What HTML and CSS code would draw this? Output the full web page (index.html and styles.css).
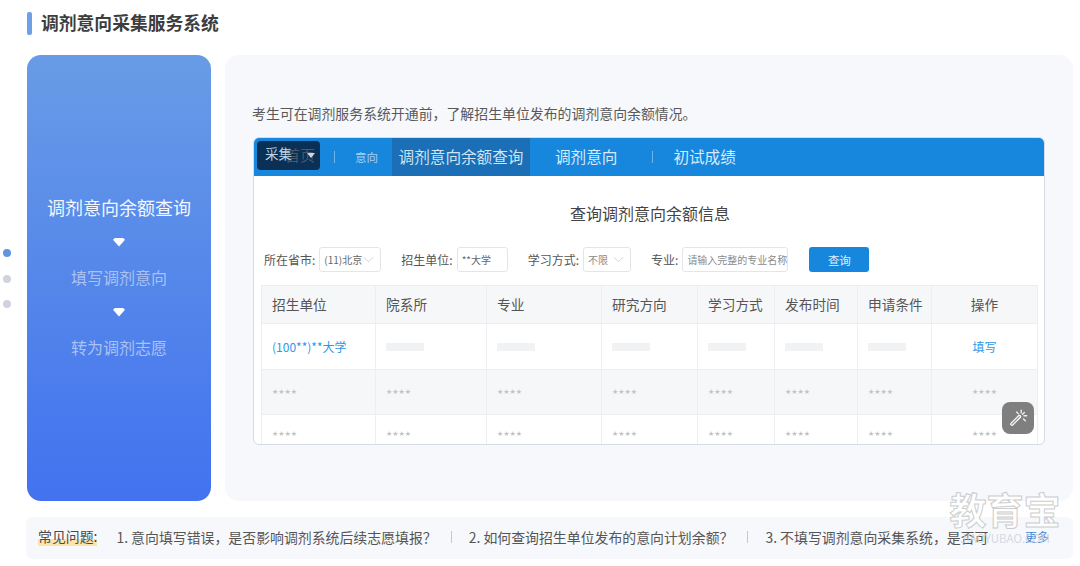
FILE: index.html
```html
<!DOCTYPE html>
<html lang="zh-CN">
<head>
<meta charset="utf-8">
<title>调剂意向采集服务系统</title>
<link rel="stylesheet" href="styles.css">
</head>
<body>
<div class="page">
  <h1 class="heading">调剂意向采集服务系统</h1>
  <div class="main">
    <div class="dots"><i class="dot on"></i><i class="dot"></i><i class="dot"></i></div>
    <nav class="side">
      <div class="step active">调剂意向余额查询</div>
      <i class="arrow"></i>
      <div class="step">填写调剂意向</div>
      <i class="arrow"></i>
      <div class="step">转为调剂志愿</div>
    </nav>
    <section class="panel">
      <p class="intro">考生可在调剂服务系统开通前，了解招生单位发布的调剂意向余额情况。</p>
      <div class="window">
        <div class="tabs">
          <div class="badge"><span class="ghost">首页</span><span class="badge-text">采集</span><i class="caret"></i></div>
          <i class="sep sep-a"></i>
          <span class="tab-small">意向</span>
          <span class="tab current">调剂意向余额查询</span>
          <span class="tab plain">调剂意向</span>
          <i class="sep sep-b"></i>
          <span class="tab last">初试成绩</span>
        </div>
        <h2 class="query-title">查询调剂意向余额信息</h2>
        <div class="form">
          <label class="lbl">所在省市:</label>
          <div class="ctl sel w62"><span>(11)北京</span><svg class="chev" viewBox="0 0 12 7"><path d="M1 1l5 5 5-5"/></svg></div>
          <label class="lbl l20">招生单位:</label>
          <div class="ctl w51 dark"><span>**大学</span></div>
          <label class="lbl l20">学习方式:</label>
          <div class="ctl sel w48"><span class="muted">不限</span><svg class="chev" viewBox="0 0 12 7"><path d="M1 1l5 5 5-5"/></svg></div>
          <label class="lbl l20">专业:</label>
          <div class="ctl w106"><span class="muted">请输入完整的专业名称</span></div>
          <button class="btn" type="button">查询</button>
        </div>
        <div class="table">
          <div class="row head">
            <span>招生单位</span><span>院系所</span><span>专业</span><span>研究方向</span><span>学习方式</span><span>发布时间</span><span>申请条件</span><span class="center">操作</span>
          </div>
          <div class="row first">
            <span class="link">(100**)**大学</span><span><i class="bar"></i></span><span><i class="bar"></i></span><span><i class="bar"></i></span><span><i class="bar"></i></span><span><i class="bar"></i></span><span><i class="bar"></i></span><span class="center link">填写</span>
          </div>
          <div class="row stars shade">
            <span>★★★★</span><span>★★★★</span><span>★★★★</span><span>★★★★</span><span>★★★★</span><span>★★★★</span><span>★★★★</span><span class="center">★★★★</span>
          </div>
          <div class="row stars tail">
            <span>★★★★</span><span>★★★★</span><span>★★★★</span><span>★★★★</span><span>★★★★</span><span>★★★★</span><span>★★★★</span><span class="center">★★★★</span>
          </div>
        </div>
        <div class="wand">
          <svg viewBox="0 0 24 24" width="22" height="22"><path class="wand-body" d="M5.500 18.500l8-8"/><path class="wand-core" d="M5.500 18.500l8-8"/><path class="wand-rays" d="M15.500 6.500v-3M18.500 9.500h3M17 8l2-2M12.500 7.500l-2-2M18 13l2 2"/></svg>
        </div>
      </div>
    </section>
  </div>
  <footer class="faq">
    <span class="faq-label">常见问题:</span>
    <span class="faq-item">1. 意向填写错误，是否影响调剂系统后续志愿填报？</span>
    <i class="faq-sep"></i>
    <span class="faq-item">2. 如何查询招生单位发布的意向计划余额？</span>
    <i class="faq-sep"></i>
    <span class="faq-item">3. 不填写调剂意向采集系统，是否可</span>
    <span class="more">更多</span>
  </footer>
  <div class="watermark"><span class="wm-cn">教育宝</span><span class="wm-en">JIAOYUBAO.COM</span></div>
</div>
</body>
</html>
```
FILE: styles.css
```css
* { box-sizing: border-box; }
html, body { margin: 0; height: 566px; overflow: hidden; background: #fff; }
body { font-family: "Noto Sans CJK SC", "Noto Sans", sans-serif; color: #444; }
i { display: block; }
.page { position: relative; width: 1080px; height: 566px; padding-top: 12px; }
.heading {
  margin: 0 0 20px 27px; height: 23px; padding-left: 14px;
  font-size: 17.800px; line-height: 21px; font-weight: 700; color: #3d3d3d;
  position: relative;
}
.heading::before {
  content: ""; position: absolute; left: 0; top: 0; width: 5px; height: 23px;
  border-radius: 2px; background: #6f9fe8;
}
.main { display: flex; height: 446px; }
.dots { width: 27px; padding: 194px 0 0 3px; display: flex; flex-direction: column; gap: 17.500px; flex: none; }
.dot { width: 8px; height: 8px; border-radius: 50%; background: #cfd3de; }
.dot.on { background: #5f95e2; }
.side {
  width: 184px; flex: none; border-radius: 14px;
  background: linear-gradient(180deg, #689ce6 0%, #4272ef 100%);
  display: flex; flex-direction: column; align-items: center; padding-top: 139px;
}
.step { font-size: 16px; line-height: 26px; height: 26px; flex: none; color: #a9c2f3; }
.step.active { font-size: 18px; color: #f4f7ff; }
.arrow {
  width: 12px; height: 9px; margin: 17.500px 0; flex: none;
  background: #fff; clip-path: polygon(0 25%, 20% 0, 80% 0, 100% 25%, 50% 100%);
}
.panel {
  width: 848px; margin-left: 14px; flex: none; border-radius: 14px;
  background: #f6f8fc; padding: 49px 28px 0;
}
.intro { margin: 0 0 15px -1px; font-size: 13.900px; line-height: 18px; color: #595959; }
.window {
  position: relative; height: 308px; background: #fff; overflow: hidden;
  border: 1px solid #d7dbe3; border-radius: 6px;
}
.tabs { height: 38px; background: #1787de; display: flex; align-items: center; color: #d5e8f8; }
.badge {
  position: relative; width: 63px; height: 29px; margin: -3px 0 0 3px; border-radius: 4px;
  background: #0a3055; display: flex; align-items: center; flex: none;
}
.badge-text { position: relative; margin: 0 0 5px 8px; font-size: 13.500px; line-height: 20px; color: #bcd4e6; }
.ghost { position: absolute; left: 28px; top: 3px; font-size: 15px; line-height: 22px; color: #47596b; }
.caret {
  position: absolute; left: 50px; top: 12px; width: 0; height: 0;
  border: 4px solid transparent; border-top: 5px solid #c9d8e6; border-bottom: 0;
}
.sep { width: 1px; height: 12px; background: #6fb4ea; flex: none; }
.sep-a { margin-left: 14px; }
.tab-small { margin-left: 20px; width: 37px; font-size: 11.500px; color: #a5d0f2; flex: none; }
.tab { font-size: 15.600px; height: 38px; line-height: 36px; flex: none; }
.current { width: 138px; text-align: center; background: #1a6fb6; color: #cfe3f4; }
.plain { margin-left: 25px; color: #d7eafa; }
.sep-b { margin-left: 35px; }
.last { margin-left: 20px; color: #d7eafa; }
.query-title { margin: 25px 0 0; font-size: 16px; line-height: 24px; font-weight: 400; color: #444; text-align: center; padding-left: 2px; }
.form { display: flex; align-items: center; height: 27px; margin: 21px 0 0 10px; font-size: 12px; color: #555; }
.lbl { flex: none; margin-right: 4px; }
.l20 { margin-left: 20px; }
.ctl {
  height: 25px; flex: none; border: 1px solid #e3e5ea; border-radius: 3px; background: #fff;
  display: flex; align-items: center; padding: 0 4px; font-size: 10px; color: #666; white-space: nowrap;
}
.sel { justify-content: space-between; padding-right: 6px; }
.muted { color: #8a8a8a; }
.chev { width: 11px; height: 7px; flex: none; fill: none; stroke: #ccd0d6; stroke-width: 1; }
.w62 { width: 62px; }
.w51 { width: 51px; }
.w48 { width: 48px; }
.w106 { width: 106px; }
.btn {
  width: 60px; height: 25px; margin-left: 21px; border: 0; border-radius: 3px;
  background: #1787de; color: #dff0fc; font: inherit; font-size: 11.500px; padding: 0; flex: none;
}
.table { margin: 12px 7px 0; border: solid #eceef1; border-width: 1px 1px 0 1px; width: 777px; }
.row {
  display: grid; grid-template-columns: 113px 111px 115px 96px 77px 83px 74px 1fr;
  border-bottom: 1px solid #eceef1;
}
.row > span {
  padding-left: 10px; border-left: 1px solid #eceef1; display: flex; align-items: center;
  font-size: 12px;
}
.row > span:first-child { border-left: 0; }
.head { height: 38px; background: #f6f7f9; }
.row.head > span { font-size: 13.700px; color: #555; padding-bottom: 2px; }
.first { height: 46px; }
.stars { height: 45px; }
.row.stars > span { color: #c2c2c2; font-family: "DejaVu Sans", sans-serif; font-size: 7px; }
.row.tail > span { padding-bottom: 6px; }
.shade { background: #f6f7f9; }
.row > .center { padding-left: 0; justify-content: center; }
.row > .link { color: #2f97e8; }
.bar { width: 38px; height: 8px; background: #f1f2f4; }
.wand {
  position: absolute; right: 10px; bottom: 10px; width: 32px; height: 32px; border-radius: 8px;
  background: #7f7f7f; display: flex; align-items: center; justify-content: center;
}
.wand-body { fill: none; stroke: #fff; stroke-width: 4; stroke-linecap: round; }
.wand-core { fill: none; stroke: #9a9a9a; stroke-width: 1.500; stroke-linecap: round; }
.wand-rays { fill: none; stroke: #eee; stroke-width: 1.500; stroke-linecap: round; }
.faq {
  margin: 16px 7px 0 26px; height: 42px; border-radius: 6px; background: #f6f8fc;
  display: flex; align-items: center; padding: 0 0 3px 12px; font-size: 13.900px; color: #555;
  white-space: nowrap; position: relative;
}
.faq-label { background: linear-gradient(180deg, transparent 62%, #fde4ad 62%); line-height: 19px; height: 19px; margin-right: 19px; color: #4b4b4b; }
.faq-item { flex: none; }
.faq-sep { width: 1px; height: 12px; background: #c4c7cc; margin: 0 17px 0 14px; flex: none; }
.more { position: absolute; left: 999px; font-size: 12px; color: #3c85d6; }
.watermark {
  position: absolute; left: 948px; top: 489px; width: 114px; display: flex; flex-direction: column;
  align-items: center; pointer-events: none;
}
.wm-cn {
  font-size: 37px; line-height: 40px; font-weight: 700; color: rgba(255,255,255,.85);
  -webkit-text-stroke: 1px rgba(170,170,170,.6);
}
.wm-en { font-size: 11.500px; line-height: 14px; margin-top: 2px; white-space: nowrap; color: rgba(205,210,220,.85); }
```
